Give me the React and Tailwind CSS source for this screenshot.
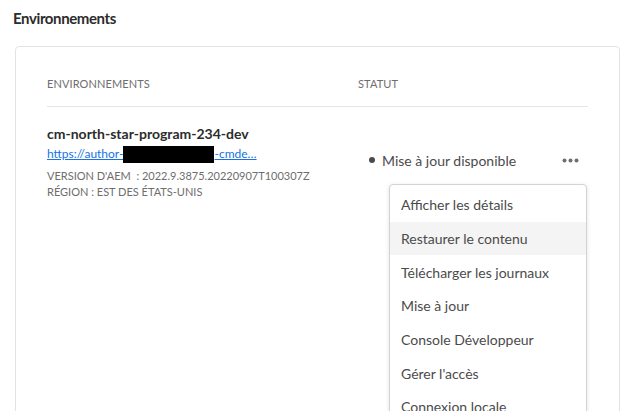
import React from 'react';

const menuItems = [
  'Afficher les détails',
  'Restaurer le contenu',
  'Télécharger les journaux',
  'Mise à jour',
  'Console Développeur',
  "Gérer l'accès",
  'Connexion locale',
];

const App = () => {
  return (
    <div
      className="w-[632px] h-[411px] overflow-hidden bg-white text-[#2c2c2c]"
      style={{ fontFamily: 'Lato, "Open Sans", sans-serif' }}
    >
      <h1 className="pl-[13px] pt-[8px] h-[46px] text-[15px] leading-[20px] font-bold tracking-[-0.4px] text-[#2c2c2c]">
        Environnements
      </h1>

      <div className="ml-[15px] w-[605px] h-[400px] border border-[#e3e3e3] rounded-[4px] px-[31px] pt-[29px]">
        {/* column headers */}
        <div className="flex border-b border-[#e6e6e6] pb-[14px] text-[11px] leading-[16px] tracking-[0.1px] text-[#6e6e6e]">
          <div className="w-[311px]">ENVIRONNEMENTS</div>
          <div>STATUT</div>
        </div>

        {/* row */}
        <div className="flex pt-[17px]">
          <div className="w-[311px]">
            <div className="text-[14px] leading-[20px] font-bold text-[#2c2c2c]">
              cm-north-star-program-234-dev
            </div>
            <div className="flex items-center h-[20px] text-[12px] text-[#1473e6]">
              <span className="underline">https://author-</span>
              <span className="inline-block w-[91px] h-[17px] bg-black" />
              <span className="underline">-cmde…</span>
            </div>
            <div className="mt-[4px] text-[11px] leading-[16px] text-[#6e6e6e]">
              VERSION D'AEM &nbsp;: 2022.9.3875.20220907T100307Z
            </div>
            <div className="text-[11px] leading-[16px] text-[#6e6e6e]">
              RÉGION : EST DES ÉTATS-UNIS
            </div>
          </div>

          <div className="relative flex-1">
            <div className="flex items-center h-[20px] mt-[26px] pl-[11px]">
              <span className="w-[6px] h-[6px] rounded-full bg-[#4b4b4b]" />
              <span className="ml-[7px] text-[14px] text-[#4b4b4b]">Mise à jour disponible</span>
              <svg className="ml-auto mr-[9px]" width="17" height="5" viewBox="0 0 17 5" fill="#6e6e6e">
                <circle cx="2.5" cy="2.5" r="2" />
                <circle cx="8.5" cy="2.5" r="2" />
                <circle cx="14.5" cy="2.5" r="2" />
              </svg>
            </div>

            <div className="absolute left-[31px] top-[60px] w-[198px] bg-white border border-[#d3d3d3] rounded-[4px] shadow-[0_1px_4px_rgba(0,0,0,0.12)] py-[3px]">
              {menuItems.map((item, i) => (
                <div
                  key={item}
                  className={`h-[33.7px] flex items-center pl-[11px] text-[14px] text-[#4b4b4b] ${i === 1 ? 'bg-[#f4f4f4]' : ''}`}
                >
                  {item}
                </div>
              ))}
            </div>
          </div>
        </div>
      </div>
    </div>
  );
};

export default App;
